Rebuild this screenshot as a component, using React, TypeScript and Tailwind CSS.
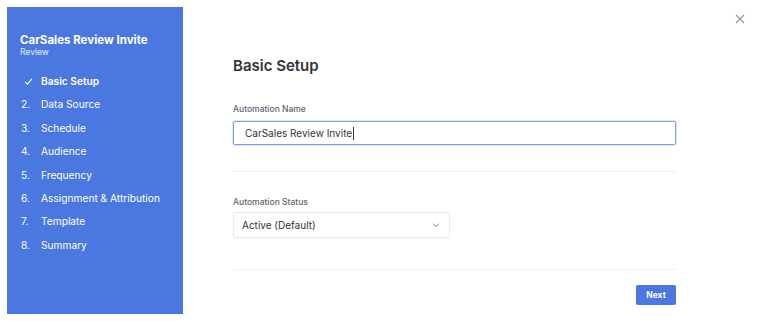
const STEPS = [
  "Basic Setup",
  "Data Source",
  "Schedule",
  "Audience",
  "Frequency",
  "Assignment & Attribution",
  "Template",
  "Summary",
];

export default function App() {
  return (
    <div
      className="relative flex h-[321px] w-[774px] bg-white p-[7px] text-[#333]"
      style={{ fontFamily: "Inter, 'Noto Sans', sans-serif" }}
    >
      {/* Sidebar */}
      <aside className="w-[176px] shrink-0 bg-[#4b78e0] pl-[13px] pt-[26px] text-white">
        <div className="text-[11.5px] font-bold leading-[14px]">CarSales Review Invite</div>
        <div className="text-[8.5px] leading-[10px] text-white/85">Review</div>
        <ul className="mt-[13px]">
          {STEPS.map((s, i) => (
            <li key={s} className="flex items-center text-[10.2px] leading-[23.4px]">
              <span className="flex w-[21px] items-center pl-[1px]">
                {i === 0 ? (
                  <svg width="9" height="9" viewBox="0 0 12 12" className="ml-[3px]">
                    <path d="M1.5 6.5 L4.5 9.5 L10.5 2.5" fill="none" stroke="white" strokeWidth="1.4" />
                  </svg>
                ) : (
                  `${i + 1}.`
                )}
              </span>
              <span className={i === 0 ? "font-semibold" : ""}>{s}</span>
            </li>
          ))}
        </ul>
      </aside>

      {/* Main */}
      <main className="ml-[50px] w-[443px] pt-[49px]">
        <h1 className="text-[15px] font-semibold leading-[20px] text-[#333]">Basic Setup</h1>

        <label className="mt-[27px] block text-[8.5px] font-medium leading-[12px] text-[#5c6670]">
          Automation Name
        </label>
        <div className="mt-[6px] flex h-[24px] items-center rounded-[2px] border border-[#7f9de8] pl-[11px] text-[10px] text-[#333] shadow-[0_0_0_1px_rgba(127,157,232,0.25)]">
          CarSales Review Invite
          <span className="ml-[1px] h-[13px] w-px bg-[#333]" />
        </div>

        <div className="mt-[26px] border-t border-[#eef0f2]" />

        <label className="mt-[24px] block text-[8.5px] font-medium leading-[12px] text-[#5c6670]">
          Automation Status
        </label>
        <div className="mt-[4px] flex h-[26px] w-[217px] items-center justify-between rounded-[2px] border border-[#e8eaed] pl-[8px] pr-[9px] text-[10px] text-[#333] shadow-[0_1px_1px_rgba(0,0,0,0.04)]">
          <span>Active (Default)</span>
          <svg width="8" height="8" viewBox="0 0 10 10">
            <path d="M1.5 3.5 L5 7 L8.5 3.5" fill="none" stroke="#6b7580" strokeWidth="1.2" />
          </svg>
        </div>

        <div className="mt-[31px] border-t border-[#eef0f2]" />

        <div className="mt-[15px] flex justify-end">
          <button className="h-[20px] w-[40px] rounded-[2px] bg-[#4b78e0] text-[8.5px] font-bold text-white">
            Next
          </button>
        </div>
      </main>

      {/* Close */}
      <svg width="10" height="10" viewBox="0 0 10 10" className="absolute left-[735px] top-[14px]">
        <path d="M1 1 L9 9 M9 1 L1 9" stroke="#8f9aa3" strokeWidth="1.2" />
      </svg>
    </div>
  );
}
